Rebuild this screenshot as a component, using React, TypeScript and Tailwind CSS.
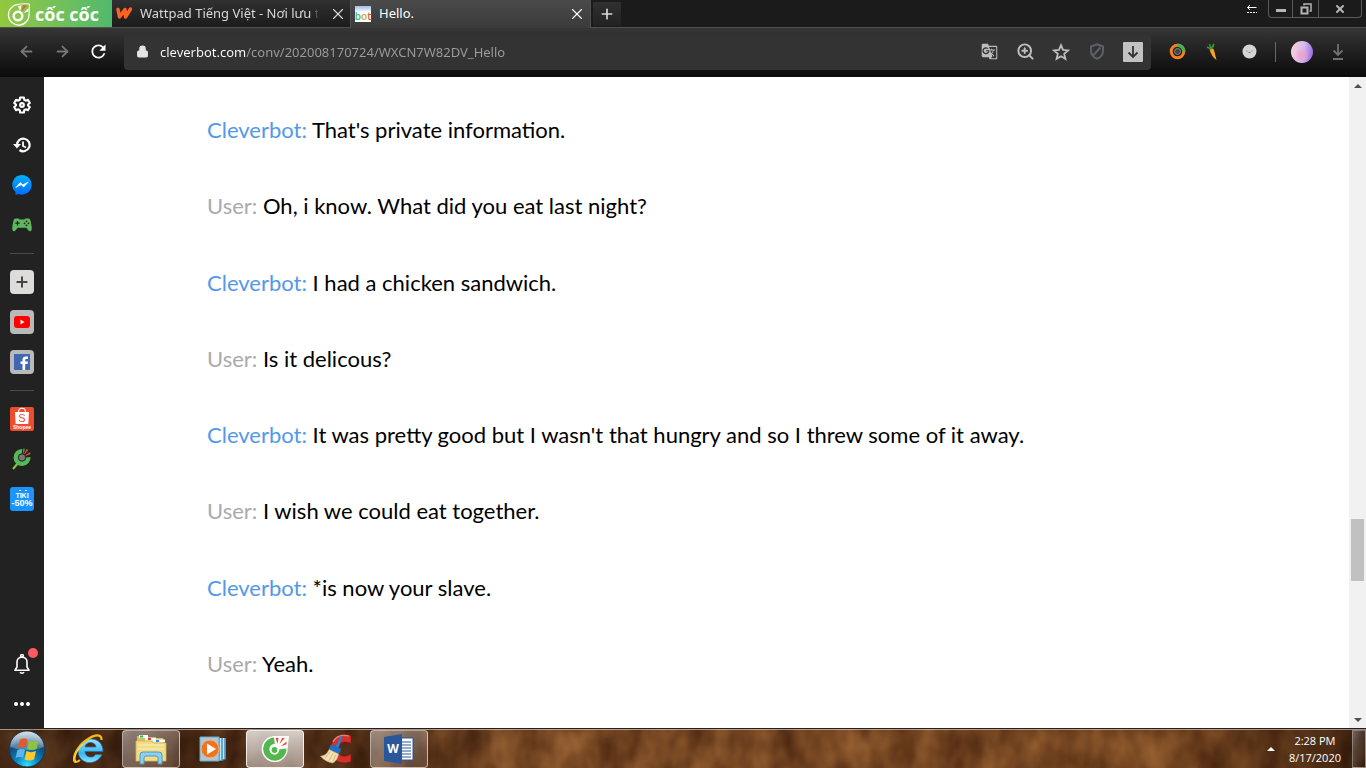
import type { ReactNode } from "react";
import { ArrowLeft, ArrowRight, Lock, Plus, X, ZoomIn } from "lucide-react";
import { MdGTranslate, MdRefresh } from "react-icons/md";

const messages = [
  { from: "Cleverbot", text: "That's private information." },
  { from: "User", text: "Oh, i know. What did you eat last night?" },
  { from: "Cleverbot", text: "I had a chicken sandwich." },
  { from: "User", text: "Is it delicous?" },
  { from: "Cleverbot", text: "It was pretty good but I wasn't that hungry and so I threw some of it away." },
  { from: "User", text: "I wish we could eat together." },
  { from: "Cleverbot", text: "*is now your slave." },
  { from: "User", text: "Yeah." },
];

/* ---------- Icons ---------- */

function CocCocMark({ size, ring, core, ray }: { size: number; ring: string; core: string; ray: string }) {
  return (
    <svg width={size} height={size} viewBox="0 0 28 28" aria-hidden="true">
      <path d="M14 1a13 13 0 1 0 12.6 12L28 1z" fill="#fff" />
      <path d="M13 2.5a11.6 11.6 0 1 0 12.4 11l-7 .7a5 5 0 1 1-4.600-5.100z" fill={ring} />
      <path d="m14.500 3 3-.3-1 6.300z" fill={ray} />
      <path d="m18.500 9 2.500-6 3-.2z" fill={ray} />
      <path d="m19.500 11.500 6-5v2.800z" fill={ray} />
      <circle cx="13.500" cy="15" r="3.800" fill={core} stroke="#fff" strokeWidth="1.800" />
    </svg>
  );
}

function BrandMark() {
  return (
    <svg width="24" height="24" viewBox="0 0 24 24" fill="none" aria-hidden="true">
      <path d="M11 2.500a10.300 10.300 0 1 0 11 9.500" stroke="#fff" strokeWidth="1.200" />
      <path d="M11 2.500c2-.8 8-.8 11.500-.5-.2 3-.2 6-.5 10" stroke="#fff" strokeWidth="1" />
      <circle cx="11" cy="14" r="4.300" stroke="#fff" strokeWidth="2.500" />
      <path d="m11 4 3.500-.5-1.500 6z" fill="#fff" />
      <path d="m14.500 9.500 2-6.500 3.500.5z" fill="#f05a3c" />
      <path d="m16.500 11 5-5v3.500z" fill="#fff" />
    </svg>
  );
}

function GearIcon() {
  return (
    <svg width="18" height="18" viewBox="0 0 24 24" fill="none" stroke="#fff" strokeWidth="2.800" strokeLinejoin="round" aria-hidden="true">
      <path d="m9.500 2-.5 3-2 1.200-2.900-1.100-2.500 4.300 2.400 1.900v1.400l-2.400 1.900 2.500 4.300L7 17.800 9 19l.5 3h5l.5-3 2-1.200 2.900 1.100 2.500-4.300-2.400-1.900v-1.400l2.400-1.900-2.500-4.300L17 6.200 15 5l-.5-3z" />
      <circle cx="12" cy="12" r="2.500" />
    </svg>
  );
}

function HistoryIcon() {
  return (
    <svg width="18" height="16" viewBox="0 0 18 16" fill="none" stroke="#fff" strokeWidth="2.200" aria-hidden="true">
      <path d="M4 8.500A6.300 6.300 0 1 1 6.500 13" />
      <path d="M10 4.500V9l3 1.500" strokeWidth="1.800" />
      <path d="M0 7h8L4 11.500z" fill="#fff" stroke="none" />
    </svg>
  );
}

function MessengerIcon() {
  return (
    <svg width="20" height="20" viewBox="0 0 20 20" aria-hidden="true">
      <defs>
        <linearGradient id="msg" x1="0" y1="0" x2="0" y2="1">
          <stop offset="0" stopColor="#00b2ff" />
          <stop offset="1" stopColor="#006aff" />
        </linearGradient>
      </defs>
      <path d="M10 0a9.800 9.800 0 1 1-3.500 19L3.500 20v-3A9.800 9.800 0 0 1 10 0z" fill="url(#msg)" />
      <path d="m3.800 12.500 4.400-5 2.700 2.300 5.300-2.800-4.400 5-2.700-2.300z" fill="#fff" stroke="#fff" strokeWidth=".6" />
    </svg>
  );
}

function GamepadIcon() {
  return (
    <svg width="20" height="14" viewBox="0 0 20 14" aria-hidden="true">
      <path d="M3.500.5h3.200l1 1h4.600l1-1h3.200c1.500 0 2 1.500 2.500 4.500.6 3 1.400 6.500 0 8-1.700 1.500-3.500-2-4.600-3.200H5.600C4.500 11 2.700 14.500 1 13c-1.400-1.500-.6-5 0-8C1.500 2 2 .5 3.500.5z" fill="#5cb85c" />
      <path d="M5.500 3v4.400M3.300 5.200h4.400" stroke="#222" strokeWidth="1.300" />
      <g fill="#222">
        <circle cx="14.500" cy="3.300" r=".9" />
        <circle cx="14.500" cy="7.300" r=".9" />
        <circle cx="12.500" cy="5.300" r=".9" />
        <circle cx="16.500" cy="5.300" r=".9" />
      </g>
    </svg>
  );
}

function ShopeeIcon() {
  return (
    <svg width="24" height="24" viewBox="0 0 24 24" aria-hidden="true">
      <rect width="24" height="24" rx="2" fill="#ee4d2d" />
      <path d="M8.500 5c0-5 7-5 7 0" fill="none" stroke="#fff" strokeWidth="1.200" />
      <path d="M5 5h14l-.7 12H5.700z" fill="#fff" />
      <text x="12" y="15" textAnchor="middle" fontSize="11" fontFamily="Liberation Sans, sans-serif" fill="#ee4d2d">S</text>
      <text x="12" y="22" textAnchor="middle" fontSize="5" fontWeight="700" fontFamily="Liberation Sans, sans-serif" fill="#fff">Shopee</text>
    </svg>
  );
}

function SearchLeafIcon() {
  return (
    <svg width="20" height="22" viewBox="0 0 20 22" aria-hidden="true">
      <path d="m1 21 5-6" stroke="#8cc63f" strokeWidth="2" />
      <path d="M10 1a8.500 8.500 0 1 0 8.500 8l-4 .5L10 6z" fill="#56b957" />
      <path d="m10.500 1 2.500-.5-1.500 6z" fill="#3a9c4c" />
      <path d="m12.500 6 2-4.500 1.500.5zM13.500 7.500 18 4.500V6z" fill="#e8503a" stroke="#e8503a" strokeWidth=".6" />
      <circle cx="10" cy="9.500" r="3.700" fill="#777" stroke="#222" />
    </svg>
  );
}

function TikiIcon() {
  return (
    <svg width="24" height="24" viewBox="0 0 24 24" fontFamily="Liberation Sans, sans-serif" fontWeight="700" fill="#fff" aria-hidden="true">
      <rect width="24" height="24" rx="3" fill="#1a94ff" />
      <path d="m9 4 1-1 1 1M15 4l1-1 1 1" fill="none" stroke="#fff" />
      <text x="12" y="11" textAnchor="middle" fontSize="7">TIKI</text>
      <text x="12" y="19" textAnchor="middle" fontSize="9">-50%</text>
    </svg>
  );
}

function BellIcon() {
  return (
    <svg width="16" height="20" viewBox="0 0 16 20" fill="none" stroke="#fff" strokeWidth="1.600" aria-hidden="true">
      <circle cx="8" cy="1.800" r="1.300" />
      <path d="M1 16.200h14L13 13V8c0-3-2-4.800-5-4.800S3 5 3 8v5z" strokeLinejoin="round" />
      <path d="M6 18.200c.8 1.300 3.200 1.300 4 0" />
    </svg>
  );
}

function WindowsOrb() {
  return (
    <svg width="38" height="38" viewBox="0 0 38 38" aria-hidden="true">
      <defs>
        <radialGradient id="orb" cx=".5" cy=".95" r=".9">
          <stop offset="0" stopColor="#35e0ff" />
          <stop offset=".35" stopColor="#0d84c0" />
          <stop offset=".7" stopColor="#134a78" />
          <stop offset="1" stopColor="#6b93b0" />
        </radialGradient>
        <linearGradient id="orbGloss" x1="0" y1="0" x2="0" y2="1">
          <stop offset="0" stopColor="#fff" stopOpacity=".7" />
          <stop offset="1" stopColor="#fff" stopOpacity=".2" />
        </linearGradient>
      </defs>
      <circle cx="19" cy="19" r="18" fill="url(#orb)" stroke="#1b3347" />
      <path d="M2.500 17a16.500 15.500 0 0 1 33 0c-8 4-24 4-33 0z" fill="url(#orbGloss)" />
      <path d="M12 9.500c3-1.500 5.500-1.300 7.500 0l-2 8.500c-2-1.300-4.500-1.300-7.500 0z" fill="#e8572a" />
      <path d="M21 10.500c3 1.500 6 1.500 9.500 0l-2 8.500c-3.500 1.500-6.500 1.300-9.500 0z" fill="#8cc43e" />
      <path d="M9.500 20c3-1.400 5.500-1.300 7.500 0l-2 8c-2-1.300-4.500-1.300-7.500 0z" fill="#5db5ec" />
      <path d="M18.500 21c3 1.500 6 1.500 9.500 0l-2 8.500c-3.500 1.500-6.500 1.300-9.500 0z" fill="#fbca2c" />
    </svg>
  );
}

function InternetExplorerIcon() {
  return (
    <svg width="32" height="32" viewBox="0 0 32 32" fill="none" aria-hidden="true">
      <defs>
        <linearGradient id="ie" x1="0" y1="0" x2="0" y2="1">
          <stop offset="0" stopColor="#9be6ff" />
          <stop offset=".6" stopColor="#37b5f0" />
          <stop offset="1" stopColor="#8fe3ff" />
        </linearGradient>
      </defs>
      <path d="M30 18.500H12c.2 6.500 8.500 7 10.500 3H29C23 34 5 31.500 5 17.500 5 3.500 30 .5 30 18.500zM12 14h11c-.5-6-10.500-6-11 0z" fill="url(#ie)" stroke="#1c6fae" strokeWidth=".7" />
      <path d="M7 27C-2 34-1 21 9 11 18 2 29-1 28.500 7" stroke="#f6bd16" strokeWidth="2.200" />
      <path d="M3 29C0 25 4 17 10 11" stroke="#ffe36b" strokeWidth="1" />
    </svg>
  );
}

function ExplorerIcon() {
  return (
    <svg width="34" height="32" viewBox="0 0 34 32" aria-hidden="true">
      <path d="M3 3h10l2 2h14v22H3z" fill="#d9bd62" />
      <path d="M5 2h9v3H5z" fill="#fff" />
      <path d="M6 2.500h3v2H6z" fill="#1db954" />
      <path d="M11 4.500h11v3H11z" fill="#fff" />
      <path d="M14 5h3v2h-3z" fill="#d8432e" />
      <path d="M19 6.500h12v3H19z" fill="#fff" />
      <path d="M22 7h3v2h-3z" fill="#2b8fe0" />
      <path d="M2 8h15l3 2h12v18H2z" fill="#f3dc86" stroke="#d3b65b" strokeWidth=".8" />
      <path d="M4 12h26M4 16h26" stroke="#fbeeb5" />
      <path d="M6 31V22q0-3 3-3h16q3 0 3 3v9h-4v-6q0-2-2-2H12q-2 0-2 2v6z" fill="#8fd0ee" stroke="#4b99c6" />
    </svg>
  );
}

function MediaPlayerIcon() {
  return (
    <svg width="28" height="26" viewBox="0 0 28 26" aria-hidden="true">
      <path d="M5 2h22v21l-4 2H5z" fill="#3f93c0" />
      <path d="M21.500 2v22M24.500 2v21" stroke="#bfe4f4" strokeWidth="1.500" />
      <path d="M1 1h19v24H1z" fill="#a9c9da" stroke="#6fa9c6" />
      <circle cx="11" cy="13" r="9" fill="#ee7421" stroke="#f9b27a" />
      <path d="m8 7.500 9 5.500-9 5.500z" fill="#fff" />
    </svg>
  );
}

function CCleanerIcon() {
  return (
    <svg width="34" height="32" viewBox="0 0 34 32" aria-hidden="true">
      <path d="M31 2.500v8.300c-3-1.800-7-2.600-10-.6-5 3.300-4 12 2 13 2.500.4 5-.4 8-2.200v7.500C22 32.500 11 28 10.500 16.500 10.500 5 21-.5 31 2.500z" fill="#d5312a" stroke="#8d1512" strokeWidth=".7" />
      <path d="M13 9c2-5 8-8 16-6" fill="none" stroke="#ef8078" strokeWidth="1.200" />
      <path d="m20.500 3 2 .8-4 11-3-1.100z" fill="#2a7fd0" />
      <path d="m12 11.500 8.500 4c1 1-.5 5-2 5.500L9 17c0-2 1.500-5 3-5.500z" fill="#1f6fc4" />
      <path d="m9 16.500 9.500 4.500c-.5 4.500-3 7.500-5.500 9-4-.5-9-2.500-12.500-7 4 0 7-2.500 8.500-6.500z" fill="#f2dfb2" stroke="#c8a96a" strokeWidth=".6" />
      <path d="m10 19-5 6M13 20.500l-4 7M16 22l-3 6" stroke="#d2b67b" />
    </svg>
  );
}

function WordIcon() {
  return (
    <svg width="32" height="32" viewBox="0 0 32 32" aria-hidden="true">
      <path d="M17 5h13v22H17z" fill="#fff" stroke="#2b579a" />
      <path d="M19 9h9M19 12h9M19 15h9M19 18h9M19 21h9M19 24h9" stroke="#2b579a" />
      <path d="M1 4 19 1v30L1 28z" fill="#2b579a" />
      <text x="10" y="20" textAnchor="middle" fontSize="12" fontWeight="700" fontFamily="Open Sans, sans-serif" fill="#fff">W</text>
    </svg>
  );
}

/* ---------- Browser chrome ---------- */

function TabStrip() {
  return (
    <header className="flex h-7 shrink-0 items-stretch bg-[#1b1b1b] text-[13px] text-[#d8d8d8]">
      <button aria-label="Menu" className="flex w-28 shrink-0 items-center gap-1 border-b border-[#505050] bg-gradient-to-r from-[#93c83d] to-[#4fb96c] pl-[7px] text-white">
        <BrandMark />
        <span className="font-['Open_Sans',sans-serif] text-lg leading-6 font-bold whitespace-nowrap">cốc cốc</span>
      </button>
      <div className="flex w-[239px] items-center border-r border-b border-[#505050] bg-gradient-to-b from-[#303030] to-[#1c1c1c] pr-[3px] pl-1">
        <svg width="16" height="13" viewBox="0 0 16 13" className="shrink-0" aria-hidden="true">
          <path d="M2 2.500 3.500 10 9 2.500 9.500 10 14.500 2" fill="none" stroke="#ff6122" strokeWidth="3.500" strokeLinejoin="round" strokeLinecap="round" />
        </svg>
        <span className="ml-2 mask-r-from-95% whitespace-nowrap">Wattpad Tiếng Việt - Nơi lưu t</span>
        <button aria-label="Close Wattpad tab" className="ml-auto">
          <X size={18} strokeWidth={1.500} />
        </button>
      </div>
      <div className="flex w-60 items-center border-r border-[#505050] bg-gradient-to-b from-[#4a4a4a] to-[#3b3b3b] pr-1 pl-1 text-white">
        <span className="flex h-4 w-4 items-end justify-center bg-gradient-to-b from-[#9dbce8] to-white to-40% text-[10px] leading-3 font-semibold" aria-hidden="true">
          <span className="text-[#3fbf7f]">b</span>
          <span className="text-[#d9a74a]">o</span>
          <span className="text-[#e0623e]">t</span>
        </span>
        <span className="ml-2">Hello.</span>
        <button aria-label="Close Hello tab" className="ml-auto">
          <X size={18} strokeWidth={1.500} />
        </button>
      </div>
      <div className="flex flex-1 items-start justify-between border-b border-[#505050]">
        <button aria-label="New tab" className="mt-0.5 ml-0.5 flex h-6 w-7 items-center justify-center bg-gradient-to-b from-[#303030] to-[#222]">
          <Plus size={16} strokeWidth={2.500} />
        </button>
        <div className="flex items-start pr-1">
          <button aria-label="Tab position" className="mt-1 mr-2.5">
            <svg width="12" height="10" viewBox="0 0 12 10" fill="none" stroke="#fff" aria-hidden="true">
              <path d="M1.500 3.500h9M4 1 1.500 3.500 4 6" />
              <path d="M1 8.500h10" strokeDasharray="2 1" />
            </svg>
          </button>
          <div className="flex h-[18px] overflow-hidden rounded-b border border-t-0 border-[#5a5a5a]">
            <button aria-label="Minimize" className="flex w-6 items-center justify-center border-r border-[#5a5a5a] pt-1">
              <span className="h-[3px] w-2.5 bg-[#b5b5b5]" />
            </button>
            <button aria-label="Restore" className="flex w-[26px] items-center justify-center border-r border-[#5a5a5a]">
              <svg width="12" height="12" viewBox="0 0 12 12" fill="none" stroke="#b5b5b5" aria-hidden="true">
                <path d="M4 2.500V1h7v7H9.500" strokeWidth="1.500" />
                <path d="M1.500 4.500h6v6h-6z" strokeWidth="2" />
              </svg>
            </button>
            <button aria-label="Close window" className="flex w-[42px] items-center justify-center">
              <X size={12} strokeWidth={4} color="#b5b5b5" />
            </button>
          </div>
        </div>
      </div>
    </header>
  );
}

function ToolButton({ label, children }: { label: string; children: ReactNode }) {
  return (
    <button aria-label={label} className="flex h-9 w-9 shrink-0 items-center justify-center">
      {children}
    </button>
  );
}

function Toolbar() {
  return (
    <nav className="flex h-[49px] shrink-0 items-center bg-gradient-to-b from-[#363636] to-[#0b0b0b] pr-2.5 pb-0.5 pl-2 text-[#bdbdbd]">
      <ToolButton label="Back">
        <ArrowLeft size={17} strokeWidth={2.500} color="#777" />
      </ToolButton>
      <ToolButton label="Forward">
        <ArrowRight size={17} strokeWidth={2.500} color="#777" />
      </ToolButton>
      <ToolButton label="Reload">
        <MdRefresh size={21} color="#fff" />
      </ToolButton>
      <div className="ml-2 flex h-9 flex-1 items-center rounded bg-[#333]">
        <Lock size={13} fill="#e4e4e4" color="#e4e4e4" className="mr-2 ml-3 shrink-0" />
        <input
          type="text"
          aria-label="Address"
          defaultValue="cleverbot.com/conv/202008170724/WXCN7W82DV_Hello"
          className="ml-[3px] h-6 min-w-0 flex-1 bg-[linear-gradient(to_right,#fff_86px,#9d9d9d_86px)] bg-clip-text text-[13px] text-transparent outline-none"
        />
        <ToolButton label="Translate">
          <MdGTranslate size={17} />
        </ToolButton>
        <ToolButton label="Zoom">
          <ZoomIn size={19} strokeWidth={2.500} />
        </ToolButton>
        <ToolButton label="Bookmark">
          <svg width="18" height="18" viewBox="0 0 18 18" fill="none" stroke="#bdbdbd" strokeWidth="1.800" aria-hidden="true">
            <path d="m9 2.200 2 4.700 5.100.5-3.900 3.400 1.200 5L9 13.200l-4.400 2.600 1.200-5L1.900 7.400 7 6.900z" />
          </svg>
        </ToolButton>
        <ToolButton label="Ad block">
          <svg width="16" height="17" viewBox="0 0 16 17" fill="none" stroke="#5d6066" strokeWidth="2" aria-hidden="true">
            <path d="M8 1.200 14 3.500v4c0 4-2.500 7-6 8.300C4.500 14.500 2 11.500 2 7.500v-4zM4.500 12 11.500 4.500" />
          </svg>
        </ToolButton>
        <ToolButton label="Save media">
          <svg width="20" height="20" viewBox="0 0 20 20" fill="none" aria-hidden="true">
            <rect width="20" height="20" rx="1" fill="#c2c2c2" />
            <path d="M10 4v11M5.500 10.500 10 15l4.500-4.500" stroke="#333" strokeWidth="1.800" />
          </svg>
        </ToolButton>
      </div>
      <div className="flex items-center pl-2">
        <ToolButton label="Tracker">
          <svg width="17" height="17" viewBox="0 0 17 17" fill="none" aria-hidden="true">
            <circle cx="8.500" cy="8.500" r="6.300" stroke="#f58220" strokeWidth="3" />
            <path d="M8.500 2.200a6.300 6.300 0 0 1 6.300 6.300" stroke="#4caf50" strokeWidth="3.400" />
            <circle cx="8.500" cy="8.500" r="3" fill="#444" stroke="#888" />
          </svg>
        </ToolButton>
        <ToolButton label="Carrot">
          <svg width="14" height="18" viewBox="0 0 14 18" aria-hidden="true">
            <path d="M3.500 6c2-1.500 3.500-1 4.500 1l2.500 10c-3-2-6-6-7-11z" fill="#f7a128" />
            <path d="M5 6 1 4M5 6 3.500 1M5 6l3-5M5.500 3.500h2.500" stroke="#2f9a2f" strokeWidth="1.500" />
          </svg>
        </ToolButton>
        <ToolButton label="Extension">
          <svg width="15" height="15" viewBox="0 0 15 15" aria-hidden="true">
            <circle cx="7.500" cy="7.500" r="7" fill="#d4d4d4" />
            <path d="M4.500 7h1M9.500 7h1M6.500 8.500h2" stroke="#777" />
          </svg>
        </ToolButton>
        <span className="mx-2 h-5 w-px bg-[#666]" />
        <ToolButton label="Profile">
          <span className="h-[22px] w-[22px] rounded-full bg-[radial-gradient(circle_at_50%_65%,#f59cc8_0%,transparent_40%),linear-gradient(100deg,#ffd2dc,#d6b8ec_55%,#8a5fe0)]" />
        </ToolButton>
        <ToolButton label="Downloads">
          <svg width="14" height="18" viewBox="0 0 14 18" fill="none" stroke="#707070" strokeWidth="1.800" aria-hidden="true">
            <path d="M7 1v11M2.500 7.500 7 12l4.500-4.500M2 16h10" />
          </svg>
        </ToolButton>
      </div>
    </nav>
  );
}

function SideItem({ label, children }: { label: string; children: ReactNode }) {
  return (
    <button aria-label={label} className="flex h-10 w-full items-center justify-center">
      {children}
    </button>
  );
}

function Sidebar() {
  return (
    <aside className="flex w-11 shrink-0 flex-col items-center bg-[#222] pt-2 pb-1">
      <SideItem label="Settings"><GearIcon /></SideItem>
      <SideItem label="History"><HistoryIcon /></SideItem>
      <SideItem label="Messenger"><MessengerIcon /></SideItem>
      <SideItem label="Games"><GamepadIcon /></SideItem>
      <span className="my-2 h-px w-6 bg-[#4a4a4a]" />
      <SideItem label="Add site">
        <span className="flex h-6 w-6 items-center justify-center rounded bg-[#dedcd8]">
          <Plus size={16} strokeWidth={3} color="#444" />
        </span>
      </SideItem>
      <SideItem label="YouTube">
        <span className="flex h-6 w-6 items-center justify-center rounded bg-[#b9b9b9]">
          <svg width="16" height="12" viewBox="0 0 16 12" aria-hidden="true">
            <rect width="16" height="12" rx="3" fill="#f00" />
            <path d="m6.500 3.500 4 2.500-4 2.500z" fill="#fff" />
          </svg>
        </span>
      </SideItem>
      <SideItem label="Facebook">
        <span className="flex h-6 w-6 items-center justify-center rounded bg-[#b9b9b9]">
          <svg width="16" height="16" viewBox="0 0 16 16" aria-hidden="true">
            <rect width="16" height="16" fill="#4267b2" />
            <path d="M8.500 16V10H6.500V7.500h2V5.500C8.500 3.500 10 2.500 11.500 2.500H14V5h-1.500c-1 0-1.300.5-1.300 1.200v1.300H14L13.600 10h-2.400v6z" fill="#fff" />
          </svg>
        </span>
      </SideItem>
      <span className="my-2 h-px w-6 bg-[#4a4a4a]" />
      <SideItem label="Shopee"><ShopeeIcon /></SideItem>
      <SideItem label="Search"><SearchLeafIcon /></SideItem>
      <SideItem label="Tiki"><TikiIcon /></SideItem>
      <div className="relative mt-auto w-full">
        <SideItem label="Notifications"><BellIcon /></SideItem>
        <span className="absolute top-1 right-1.5 h-2.5 w-2.5 rounded-full bg-[#ff5a5f]" />
      </div>
      <SideItem label="More">
        <svg width="16" height="4" viewBox="0 0 16 4" fill="#fff" aria-hidden="true">
          <circle cx="2" cy="2" r="2" />
          <circle cx="8" cy="2" r="2" />
          <circle cx="14" cy="2" r="2" />
        </svg>
      </SideItem>
    </aside>
  );
}

function Scrollbar() {
  return (
    <div className="flex w-[17px] shrink-0 flex-col items-center bg-[#f1f1f1]">
      <button aria-label="Scroll up" className="flex h-[17px] w-full items-center justify-center">
        <svg width="8" height="4" viewBox="0 0 8 4" fill="#505050" aria-hidden="true"><path d="m0 4 4-4 4 4z" /></svg>
      </button>
      <span className="flex-[425]" />
      <span className="h-[62px] w-[13px] bg-[#c1c1c1]" />
      <span className="flex-[130]" />
      <button aria-label="Scroll down" className="flex h-[17px] w-full items-center justify-center">
        <svg width="8" height="4" viewBox="0 0 8 4" fill="#505050" aria-hidden="true"><path d="m0 0 4 4 4-4z" /></svg>
      </button>
    </div>
  );
}

/* ---------- Desktop taskbar ---------- */

function FurBackground() {
  return (
    <svg className="absolute inset-0 h-full w-full" preserveAspectRatio="none" viewBox="0 0 1366 40" aria-hidden="true">
      <defs>
        <filter id="fur" x="0" y="0" width="1" height="1" colorInterpolationFilters="sRGB">
          <feTurbulence type="fractalNoise" baseFrequency=".035 .022" numOctaves="3" seed="8" />
          <feColorMatrix values=".55 0 0 0 .17  .42 0 0 0 .06  .25 0 0 0 .01  0 0 0 0 1" />
        </filter>
        <linearGradient id="furShade">
          <stop offset="0" stopColor="#1e0f08" stopOpacity=".55" />
          <stop offset=".3" stopColor="#2a1409" stopOpacity=".4" />
          <stop offset=".4" stopColor="#7a4520" stopOpacity=".2" />
          <stop offset=".85" stopColor="#6a3a15" stopOpacity=".3" />
          <stop offset="1" stopColor="#200f06" stopOpacity=".65" />
        </linearGradient>
      </defs>
      <rect width="1366" height="40" filter="url(#fur)" />
      <rect width="1366" height="40" fill="url(#furShade)" />
    </svg>
  );
}

function TaskButton({ label, state, children }: { label: string; state?: "open" | "active"; children: ReactNode }) {
  let look = "border-transparent";
  if (state === "open") look = "border-white/50 bg-gradient-to-br from-white/45 to-white/10";
  if (state === "active") look = "border-white/80 bg-gradient-to-b from-white/75 to-white/45";

  return (
    <button aria-label={label} className={`flex h-[38px] w-[58px] items-center justify-center rounded-sm border ${look}`}>
      {children}
    </button>
  );
}

function Taskbar() {
  return (
    <footer className="relative h-10 shrink-0 overflow-hidden border-t border-[#2b1c16] bg-[#5a361d]">
      <FurBackground />
      <div className="relative flex h-full items-center gap-1 border-t border-white/50">
        <button aria-label="Start" className="flex w-14 justify-center pr-0.5">
          <WindowsOrb />
        </button>
        <TaskButton label="Internet Explorer"><InternetExplorerIcon /></TaskButton>
        <TaskButton label="File Explorer" state="open"><ExplorerIcon /></TaskButton>
        <TaskButton label="Media Player"><MediaPlayerIcon /></TaskButton>
        <TaskButton label="Cốc Cốc" state="active">
          <CocCocMark size={28} ring="#52b84e" core="#52b84e" ray="#ee4c38" />
        </TaskButton>
        <TaskButton label="CCleaner"><CCleanerIcon /></TaskButton>
        <TaskButton label="Word" state="open"><WordIcon /></TaskButton>
        <div className="ml-auto flex h-full items-center text-white">
          <button aria-label="Show hidden icons" className="mr-3.5">
            <svg width="8" height="4" viewBox="0 0 8 4" fill="#fff" aria-hidden="true"><path d="m0 4 4-4 4 4z" /></svg>
          </button>
          <div className="mr-[11px] text-center font-['Open_Sans','Noto_Sans',sans-serif] text-[11px] leading-[17px]">
            <p>2:28 PM</p>
            <p>8/17/2020</p>
          </div>
          <button aria-label="Show desktop" className="h-full w-3.5 border border-white/40 bg-gradient-to-br from-white/30 to-black/20" />
        </div>
      </div>
    </footer>
  );
}

export default function App() {
  return (
    <div className="flex h-screen min-w-0 flex-col overflow-hidden bg-white font-['Noto_Sans','Open_Sans',sans-serif]">
      <TabStrip />
      <Toolbar />
      <div className="flex min-h-0 flex-1">
        <Sidebar />
        <main className="flex min-w-0 flex-1 flex-col justify-between bg-white px-[163px] pt-[39px] pb-[50px] font-['Lato',sans-serif] text-[22px] leading-7 text-black">
          {messages.map((message) => (
            <p key={message.text}>
              <span className={message.from === "User" ? "text-[#aaa]" : "text-[#5499e8]"}>{message.from}:</span>{" "}
              {message.text}
            </p>
          ))}
        </main>
        <Scrollbar />
      </div>
      <Taskbar />
    </div>
  );
}
